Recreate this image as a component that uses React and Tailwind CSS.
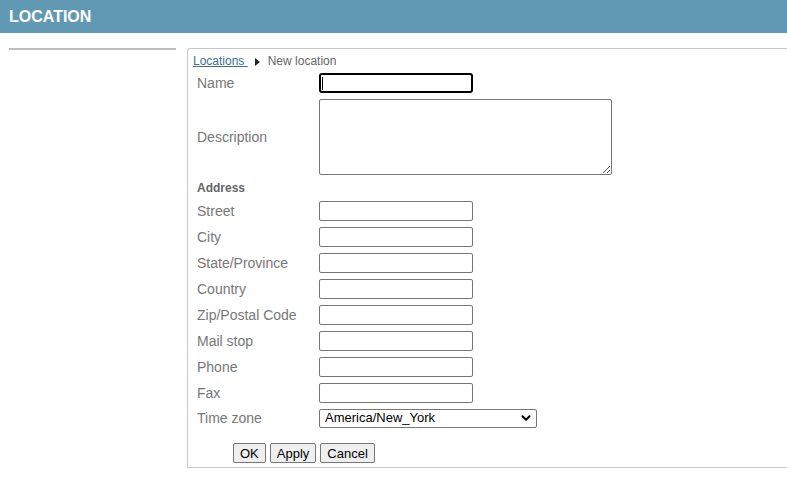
import React from 'react';
import { ChevronDown } from 'lucide-react';

const addressFields = [
  'Street',
  'City',
  'State/Province',
  'Country',
  'Zip/Postal Code',
  'Mail stop',
  'Phone',
  'Fax',
];

const Row = ({ label, className = 'h-[26px]', children }) => (
  <div className={`flex items-center ${className}`}>
    <div className="w-[126px] pl-1 text-[14px] text-[#777]">{label}</div>
    {children}
  </div>
);

const TextInput = () => (
  <input
    type="text"
    className="h-[20px] w-[154px] rounded-[2px] border border-[#767676] bg-white px-1 text-[13px]"
  />
);

export default function App() {
  return (
    <div className="min-h-[481px] bg-white font-['Liberation_Sans',Arial,sans-serif]">
      {/* Header */}
      <div className="flex h-[33px] items-center bg-[#6199b5] px-[9px]">
        <h1 className="text-[16px] font-bold text-white">LOCATION</h1>
      </div>

      <div className="mt-[15px] flex">
        {/* Sidebar */}
        <div className="ml-[9px] w-[167px] shrink-0">
          <div className="h-[2px] bg-[#bdbdbd]" />
        </div>

        {/* Main panel */}
        <div className="ml-[11px] h-[420px] flex-1 rounded-tl-[3px] border border-r-0 border-[#c8c8c8] pl-[5px] pt-[5px]">
          {/* Breadcrumb */}
          <div className="flex h-[16px] items-start text-[12px] leading-[15px]">
            <a href="#" className="text-[#3a6f90] underline">Locations&nbsp;</a>
            <span className="ml-[7px] mr-[8px] mt-[4px] h-0 w-0 border-y-[4px] border-l-[5px] border-y-transparent border-l-[#222]" />
            <span className="text-[#666]">New location</span>
          </div>

          <Row label="Name">
            <div className="relative flex h-[20px] w-[154px] items-center rounded-[3px] border-2 border-black bg-white">
              <span className="ml-[1px] h-[13px] w-[1px] bg-black" />
            </div>
          </Row>

          <Row label="Description" className="h-[82px]">
            <textarea className="h-[76px] w-[293px] rounded-[2px] border border-[#767676] bg-white" />
          </Row>

          <div className="flex h-[20px] items-center pl-1 text-[12px] font-bold text-[#666]">
            Address
          </div>

          {addressFields.map((f) => (
            <Row key={f} label={f}>
              <TextInput />
            </Row>
          ))}

          <Row label="Time zone" className="h-[24px]">
            <div className="relative flex h-[19px] w-[218px] items-center rounded-[2px] border border-[#767676] bg-white pl-[5px] text-[13px] text-black">
              America/New_York
              <ChevronDown className="absolute right-[3px] h-[14px] w-[14px]" strokeWidth={3.5} />
            </div>
          </Row>

          <div className="ml-[40px] mt-[13px] flex gap-[4px] text-[13px] text-black">
            <button className="h-[20px] rounded-[2px] border border-[#767676] bg-[#efefef] px-[6px]">OK</button>
            <button className="h-[20px] rounded-[2px] border border-[#767676] bg-[#efefef] px-[6px]">Apply</button>
            <button className="h-[20px] rounded-[2px] border border-[#767676] bg-[#efefef] px-[6px]">Cancel</button>
          </div>
        </div>
      </div>
    </div>
  );
}
